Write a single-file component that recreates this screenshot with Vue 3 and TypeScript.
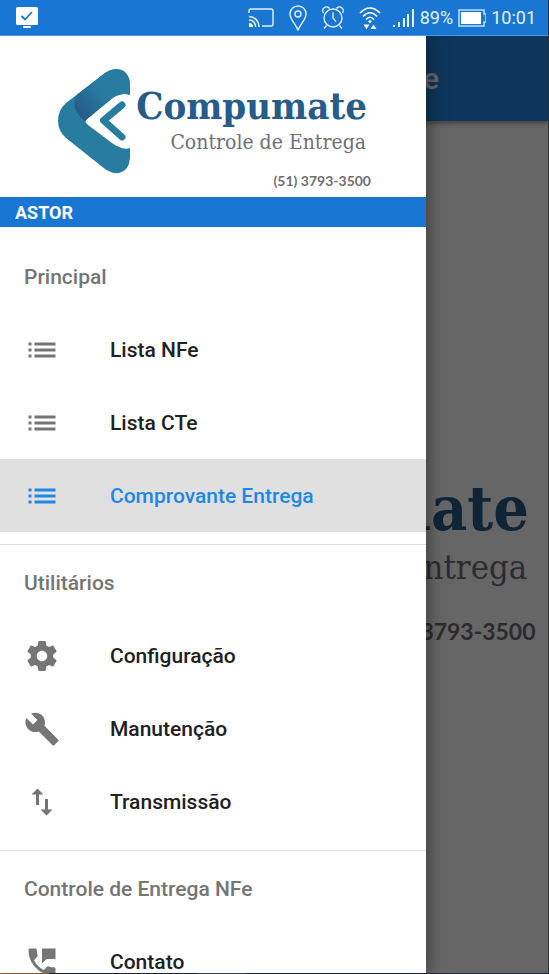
<script setup lang="ts">
import { ref } from 'vue'

interface MenuItem {
  id: string
  label: string
  icon: string
}

interface MenuSection {
  title: string
  items: MenuItem[]
}

const icons: Record<string, string> = {
  list: 'M3 13h2v-2H3v2zm0 4h2v-2H3v2zm0-8h2V7H3v2zm4 4h14v-2H7v2zm0 4h14v-2H7v2zM7 7v2h14V7H7z',
  settings:
    'M19.43 12.98c.04-.32.07-.64.07-.98s-.03-.66-.07-.98l2.11-1.65c.19-.15.24-.42.12-.64l-2-3.46c-.12-.22-.39-.3-.61-.22l-2.49 1c-.52-.4-1.08-.73-1.69-.98l-.38-2.65C14.46 2.18 14.25 2 14 2h-4c-.25 0-.46.18-.49.42l-.38 2.65c-.61.25-1.17.59-1.69.98l-2.49-1c-.23-.09-.49 0-.61.22l-2 3.46c-.13.22-.07.49.12.64l2.11 1.65c-.04.32-.07.65-.07.98s.03.66.07.98l-2.11 1.65c-.19.15-.24.42-.12.64l2 3.46c.12.22.39.3.61.22l2.49-1c.52.4 1.08.73 1.69.98l.38 2.65c.03.24.24.42.49.42h4c.25 0 .46-.18.49-.42l.38-2.65c.61-.25 1.17-.59 1.69-.98l2.49 1c.23.09.49 0 .61-.22l2-3.46c.12-.22.07-.49-.12-.64l-2.11-1.65zM12 15.5c-1.93 0-3.5-1.57-3.5-3.5s1.57-3.5 3.5-3.5 3.5 1.57 3.5 3.5-1.57 3.5-3.5 3.5z',
  build:
    'M22.7 19l-9.1-9.1c.9-2.3.4-5-1.5-6.9-2-2-5-2.4-7.4-1.3L9 6 6 9 1.6 4.7C.4 7.1.9 10.1 2.9 12.1c1.9 1.9 4.6 2.4 6.9 1.5l9.1 9.1c.4.4 1 .4 1.4 0l2.3-2.3c.5-.4.5-1.1.1-1.4z',
  transfer: 'M9 3L5 6.99h3V14h2V6.99h3L9 3zm7 14.01V10h-2v7.01h-3L15 21l4-3.99h-3z',
  phone:
    'M20 15.5c-1.25 0-2.45-.2-3.57-.57-.35-.11-.74-.03-1.02.24l-2.2 2.2c-2.83-1.44-5.15-3.75-6.59-6.58l2.2-2.21c.28-.27.36-.66.25-1.01C8.7 6.45 8.5 5.25 8.5 4c0-.55-.45-1-1-1H4c-.55 0-1 .45-1 1 0 9.39 7.61 17 17 17 .55 0 1-.45 1-1v-3.5c0-.55-.45-1-1-1zM12 3v10l3-3h6V3h-9z',
}

const sections: MenuSection[] = [
  {
    title: 'Principal',
    items: [
      { id: 'nfe', label: 'Lista NFe', icon: 'list' },
      { id: 'cte', label: 'Lista CTe', icon: 'list' },
      { id: 'comprovante', label: 'Comprovante Entrega', icon: 'list' },
    ],
  },
  {
    title: 'Utilitários',
    items: [
      { id: 'config', label: 'Configuração', icon: 'settings' },
      { id: 'manutencao', label: 'Manutenção', icon: 'build' },
      { id: 'transmissao', label: 'Transmissão', icon: 'transfer' },
    ],
  },
  {
    title: 'Controle de Entrega NFe',
    items: [{ id: 'contato', label: 'Contato', icon: 'phone' }],
  },
]

const selected = ref('comprovante')
</script>

<template>
  <div class="screen">
    <header class="status">
      <svg class="monitor" width="24" height="22" viewBox="0 0 24 22" aria-hidden="true">
        <rect x="1" y="0" width="22" height="18" rx="1.5" fill="#fff" />
        <rect x="8" y="19" width="8" height="2" rx="1" fill="#fff" />
        <path d="M6.5 9l3.5 3.5L17 5" fill="none" stroke="#1976d2" stroke-width="1.8" />
      </svg>
      <div class="indicators">
        <div class="notices">
          <svg width="26" height="20" viewBox="0 0 26 20" fill="none" stroke="#e3f2fd" stroke-width="1.4" aria-hidden="true">
            <path d="M1 5V3Q1 1 3 1H23Q25 1 25 3V16Q25 18 23 18H14" />
            <path d="M1 8.5A10 10 0 0 1 11 19M1 12A6.5 6.5 0 0 1 7.5 19" stroke-width="1.6" />
            <path d="M1 15A4 4 0 0 1 5 19H1z" fill="#fff" stroke="none" />
          </svg>
          <svg width="18" height="26" viewBox="0 0 18 26" fill="none" stroke="#e3f2fd" stroke-width="1.4" aria-hidden="true">
            <path d="M9 25C6.5 19 1 14.5 1 9A8 8 0 0 1 17 9C17 14.5 11.5 19 9 25z" />
            <circle cx="9" cy="9" r="3" />
          </svg>
          <svg width="22" height="24" viewBox="0 0 22 24" fill="none" stroke="#e3f2fd" stroke-width="1.4" aria-hidden="true">
            <circle cx="11" cy="12" r="9" />
            <path d="M11 6.5V12l3 3.5M4.500 19.5L2 22.5M17.5 19.5L20 22.5" />
            <path d="M1.5 7A3.6 3.6 0 0 1 7.5 2.5M20.5 7A3.6 3.6 0 0 0 14.5 2.5" />
          </svg>
          <svg width="22" height="24" viewBox="0 0 22 24" fill="none" stroke="#fff" stroke-width="1.7" aria-hidden="true">
            <path d="M1 7Q11-3 21 7M4 10.5Q11 3 18 10.5M7 13.5Q11 9 15 13.500" />
            <path d="M9 15L11 17.5L13 15Q11 13.5 9 15zM4.5 18.500H10.500L7.500 23zM11.500 23H17.500L14.500 18.500z" fill="#fff" stroke="none" />
          </svg>
        </div>
        <div class="readings">
          <svg width="22" height="20" viewBox="0 0 22 20" fill="#e3f2fd" aria-hidden="true">
            <path d="M0 17h2v2H0zM5 14h2v5H5zM10 10h2v9h-2zM14 6h2v13h-2zM19 1h2v18h-2z" />
          </svg>
          <span>89%</span>
          <svg width="28" height="18" viewBox="0 0 28 18" aria-hidden="true">
            <path d="M1 1H26V5H28V13H26V17H1z" fill="none" stroke="#bbdefb" stroke-width="1.6" />
            <rect x="3" y="3" width="20" height="12" fill="#fff" />
          </svg>
          <span>10:01</span>
        </div>
      </div>
    </header>

    <div class="stage">
      <main class="page">
        <div class="toolbar"><h1>Compumate</h1></div>
        <div class="splash">
          <svg class="splash-logo" viewBox="56 66 318 124" role="img" aria-label="Compumate Controle de Entrega">
            <text class="brand" x="367" y="119" text-anchor="end">Compumate</text>
            <text class="tagline" x="366" y="149" text-anchor="end">Controle de Entrega</text>
            <text class="tel" x="371" y="186" text-anchor="end">(51) 3793-3500</text>
          </svg>
        </div>
        <div class="scrim"></div>
      </main>

      <aside class="drawer">
        <div class="banner">
          <svg class="logo" viewBox="56 66 318 124" role="img" aria-label="Compumate Controle de Entrega">
            <defs>
              <linearGradient id="fold" x1="78" y1="112" x2="102" y2="90" gradientUnits="userSpaceOnUse">
                <stop offset="0" stop-color="#275c88" />
                <stop offset="1" stop-color="#287c9f" />
              </linearGradient>
            </defs>
            <path
              d="M130 95V84Q129 70 117 69Q111 69 105 73L66 103Q58 110 58 121Q58 131 66 138L105 169Q112 174 119 173Q129 171 130 158V148C124 150 118 147 112 143L88 125Q83 121 88 117L109 101C117 94 124 93 130 95z"
              fill="#287c9f"
            />
            <path d="M78 94L105 73Q112 68 119 69.5Q129 72 130 84V95C124 93 117 94 109 101L85 121Q76 114 74.5 106Q74 98 78 94z" fill="url(#fold)" />
            <path d="M122 105L103.5 120.5L122 137" fill="none" stroke="#287c9f" stroke-width="7" stroke-linecap="round" stroke-linejoin="round" />
            <text class="brand" x="367" y="119" text-anchor="end">Compumate</text>
            <text class="tagline" x="366" y="149" text-anchor="end">Controle de Entrega</text>
            <text class="tel" x="371" y="186" text-anchor="end">(51) 3793-3500</text>
          </svg>
        </div>
        <div class="user">ASTOR</div>
        <nav>
          <section v-for="section in sections" :key="section.title" class="group">
            <h2>{{ section.title }}</h2>
            <button
              v-for="item in section.items"
              :key="item.id"
              type="button"
              class="item"
              :class="{ active: item.id === selected }"
              @click="selected = item.id"
            >
              <svg width="36" height="36" viewBox="0 0 24 24" aria-hidden="true">
                <path :d="icons[item.icon]" />
              </svg>
              <span>{{ item.label }}</span>
            </button>
          </section>
        </nav>
      </aside>
    </div>
    <div class="edge"></div>
  </div>
</template>

<style>
body {
  margin: 0;
}
</style>

<style scoped>
.screen {
  display: flex;
  flex-direction: column;
  height: 100vh;
  overflow: hidden;
  font-family: Roboto, 'Liberation Sans', sans-serif;
}
.status {
  position: relative;
  z-index: 1;
  display: flex;
  align-items: center;
  justify-content: space-between;
  box-sizing: border-box;
  height: 36px;
  flex: none;
  padding: 0 12px 0 15px;
  background: #1976d2;
  border-bottom: 1px solid #5096dd;
  border-right: 1px solid #263238;
  color: #e3f2fd;
  font-size: 18px;
}
.indicators {
  display: flex;
  align-items: center;
  gap: 12px;
}
.notices {
  display: flex;
  align-items: center;
  gap: 15px;
}
.readings {
  display: flex;
  align-items: center;
  gap: 5px;
}
.indicators svg {
  flex: none;
}
.stage {
  position: relative;
  flex: 1;
  min-height: 0;
}
.page {
  position: relative;
  display: flex;
  flex-direction: column;
  box-sizing: border-box;
  height: 100%;
  border-right: 1px solid #333;
  background: #fff;
}
.toolbar {
  display: flex;
  align-items: center;
  justify-content: flex-end;
  height: 85px;
  padding-right: 109px;
  background: #2087e3;
  box-shadow: 0 2px 5px rgba(0, 0, 0, 0.4);
}
.toolbar h1 {
  margin: 0;
  color: #fff;
  font-size: 30px;
  font-weight: 500;
}
.splash {
  display: flex;
  flex: 1;
  align-items: center;
  justify-content: flex-end;
  padding: 0 8px 4px;
}
.splash-logo {
  width: 98%;
}
.scrim {
  position: absolute;
  inset: 0;
  background: rgba(0, 0, 0, 0.6);
}
.drawer {
  position: absolute;
  inset: 0 123px 0 0;
  overflow: hidden;
  background: #fff;
  box-shadow: 0 0 18px rgba(0, 0, 0, 0.5);
}
.banner {
  padding: 30px 52px 7px 56px;
}
.logo {
  display: block;
  width: 100%;
}
.brand {
  font-family: 'DejaVu Serif Condensed', 'DejaVu Serif', serif;
  font-size: 38px;
  font-weight: 700;
  fill: #275c88;
}
.tagline {
  font-family: 'DejaVu Serif Condensed', 'DejaVu Serif', serif;
  font-size: 21px;
  fill: #6f6f78;
}
.tel {
  font-family: Lato, sans-serif;
  font-size: 14px;
  font-weight: 700;
  fill: #6f6f74;
}
.user {
  padding: 1px 15px 0;
  background: #1976d2;
  color: #fff;
  font-size: 18px;
  font-weight: 700;
  line-height: 29px;
}
.group {
  padding: 1px 0 12px;
  border-top: 1px solid #dedede;
}
.group:first-child {
  padding-top: 13px;
  border-top: 0;
}
h2 {
  margin: 0;
  padding: 2px 24px 0;
  color: #757575;
  font-size: 21px;
  font-weight: 500;
  line-height: 71px;
}
.item {
  display: flex;
  align-items: center;
  gap: 50px;
  width: 100%;
  height: 73px;
  padding: 0 24px;
  border: 0;
  background: none;
  color: #212121;
  font-family: inherit;
  font-size: 21px;
  font-weight: 500;
  text-align: left;
}
.item svg {
  flex: none;
  fill: #757575;
}
.item.active {
  background: #e0e0e0;
  color: #1e88e5;
}
.item.active svg {
  fill: #1e88e5;
}
.edge {
  flex: none;
  height: 1px;
  background: linear-gradient(90deg, #b5713c 49px, #242b45 49px 197px, #4d5878 197px 245px, #242b45 245px);
}
</style>
